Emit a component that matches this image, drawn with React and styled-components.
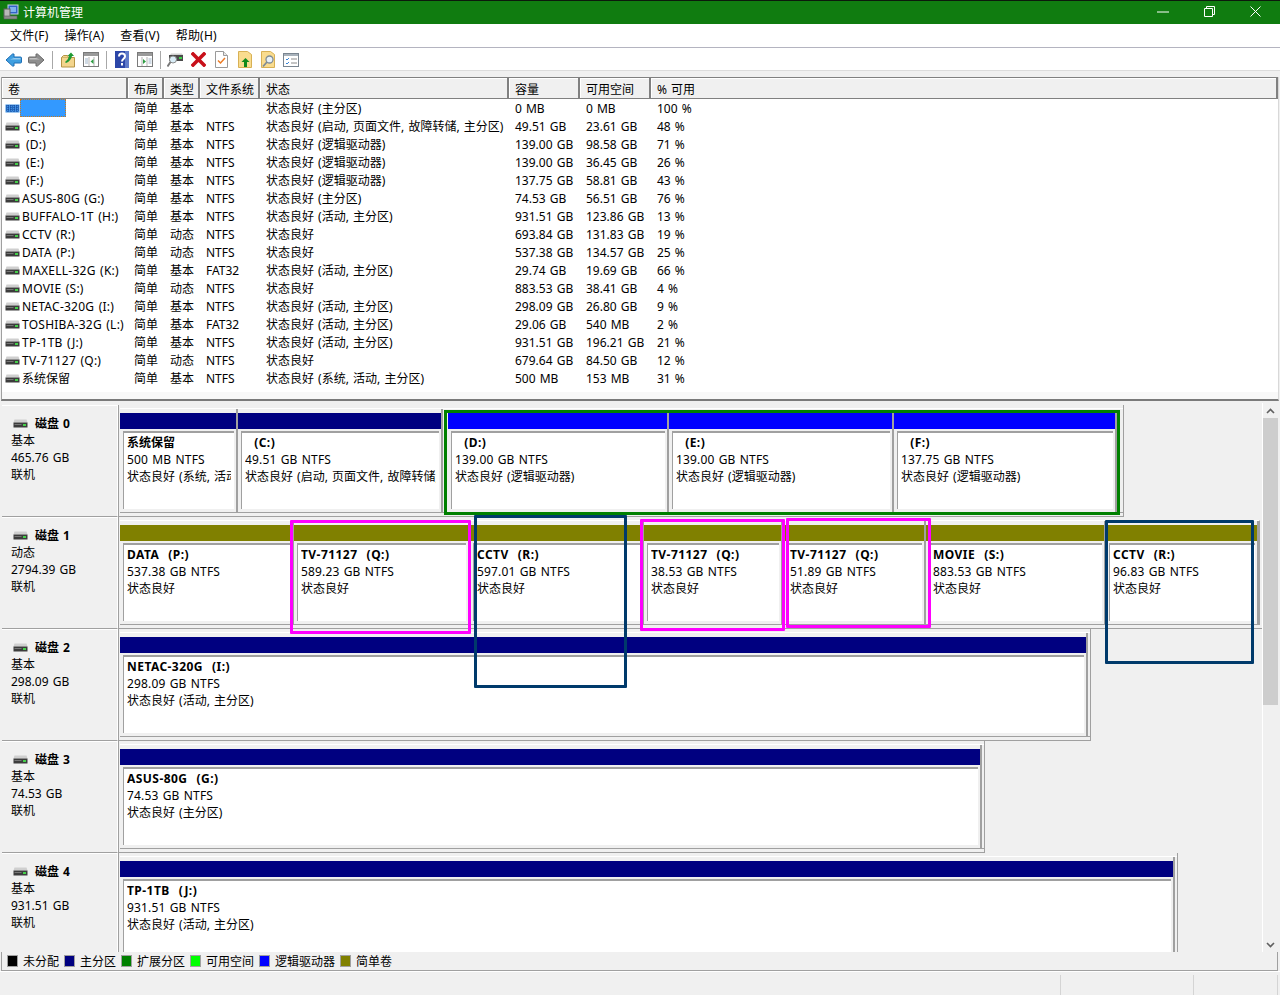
import React from "react";
import styled, { createGlobalStyle } from "styled-components";

const GlobalStyle = createGlobalStyle`
  html, body { margin: 0; padding: 0; background: #f0f0f0; }
  body { font-family: "Noto Sans", "Noto Sans CJK SC", sans-serif; font-size: 12px; color: #000; word-spacing: 1px; }
  * { box-sizing: border-box; }
`;

const volumes = [
  ["", "简单", "基本", "", "状态良好 (主分区)", "0 MB", "0 MB", "100 %"],
  ["(C:)", "简单", "基本", "NTFS", "状态良好 (启动, 页面文件, 故障转储, 主分区)", "49.51 GB", "23.61 GB", "48 %"],
  ["(D:)", "简单", "基本", "NTFS", "状态良好 (逻辑驱动器)", "139.00 GB", "98.58 GB", "71 %"],
  ["(E:)", "简单", "基本", "NTFS", "状态良好 (逻辑驱动器)", "139.00 GB", "36.45 GB", "26 %"],
  ["(F:)", "简单", "基本", "NTFS", "状态良好 (逻辑驱动器)", "137.75 GB", "58.81 GB", "43 %"],
  ["ASUS-80G (G:)", "简单", "基本", "NTFS", "状态良好 (主分区)", "74.53 GB", "56.51 GB", "76 %"],
  ["BUFFALO-1T (H:)", "简单", "基本", "NTFS", "状态良好 (活动, 主分区)", "931.51 GB", "123.86 GB", "13 %"],
  ["CCTV (R:)", "简单", "动态", "NTFS", "状态良好", "693.84 GB", "131.83 GB", "19 %"],
  ["DATA (P:)", "简单", "动态", "NTFS", "状态良好", "537.38 GB", "134.57 GB", "25 %"],
  ["MAXELL-32G (K:)", "简单", "基本", "FAT32", "状态良好 (活动, 主分区)", "29.74 GB", "19.69 GB", "66 %"],
  ["MOVIE (S:)", "简单", "动态", "NTFS", "状态良好", "883.53 GB", "38.41 GB", "4 %"],
  ["NETAC-320G (I:)", "简单", "基本", "NTFS", "状态良好 (活动, 主分区)", "298.09 GB", "26.80 GB", "9 %"],
  ["TOSHIBA-32G (L:)", "简单", "基本", "FAT32", "状态良好 (活动, 主分区)", "29.06 GB", "540 MB", "2 %"],
  ["TP-1TB (J:)", "简单", "基本", "NTFS", "状态良好 (活动, 主分区)", "931.51 GB", "196.21 GB", "21 %"],
  ["TV-71127 (Q:)", "简单", "动态", "NTFS", "状态良好", "679.64 GB", "84.50 GB", "12 %"],
  ["系统保留", "简单", "基本", "NTFS", "状态良好 (系统, 活动, 主分区)", "500 MB", "153 MB", "31 %"],
];

const headers = ["卷", "布局", "类型", "文件系统", "状态", "容量", "可用空间", "% 可用"];

const disks = [
  {
    name: "磁盘 0", kind: "基本", size: "465.76 GB", color: "#000080",
    parts: [
      { width: 118, title: "系统保留", info: "500 MB NTFS", status: "状态良好 (系统, 活动, 主分区)" },
      { width: 205, title: "\u00a0\u00a0(C:)", info: "49.51 GB NTFS", status: "状态良好 (启动, 页面文件, 故障转储, 主分区)" },
    ],
    logical: [
      { width: 221, title: "\u00a0\u00a0(D:)", info: "139.00 GB NTFS", status: "状态良好 (逻辑驱动器)" },
      { width: 225, title: "\u00a0\u00a0(E:)", info: "139.00 GB NTFS", status: "状态良好 (逻辑驱动器)" },
      { width: 223, title: "\u00a0\u00a0(F:)", info: "137.75 GB NTFS", status: "状态良好 (逻辑驱动器)" },
    ],
  },
  {
    name: "磁盘 1", kind: "动态", size: "2794.39 GB", color: "#808000", full: true,
    parts: [
      { width: 174, title: "DATA  (P:)", info: "537.38 GB NTFS", status: "状态良好" },
      { width: 176, title: "TV-71127  (Q:)", info: "589.23 GB NTFS", status: "状态良好" },
      { width: 174, title: "CCTV  (R:)", info: "597.01 GB NTFS", status: "状态良好" },
      { width: 139, title: "TV-71127  (Q:)", info: "38.53 GB NTFS", status: "状态良好" },
      { width: 143, title: "TV-71127  (Q:)", info: "51.89 GB NTFS", status: "状态良好" },
      { width: 180, title: "MOVIE  (S:)", info: "883.53 GB NTFS", status: "状态良好" },
      { width: 153, title: "CCTV  (R:)", info: "96.83 GB NTFS", status: "状态良好" },
    ],
  },
  {
    name: "磁盘 2", kind: "基本", size: "298.09 GB", color: "#000080",
    parts: [{ width: 968, title: "NETAC-320G  (I:)", info: "298.09 GB NTFS", status: "状态良好 (活动, 主分区)" }],
  },
  {
    name: "磁盘 3", kind: "基本", size: "74.53 GB", color: "#000080",
    parts: [{ width: 862, title: "ASUS-80G  (G:)", info: "74.53 GB NTFS", status: "状态良好 (主分区)" }],
  },
  {
    name: "磁盘 4", kind: "基本", size: "931.51 GB", color: "#000080",
    parts: [{ width: 1055, title: "TP-1TB  (J:)", info: "931.51 GB NTFS", status: "状态良好 (活动, 主分区)" }],
  },
];

const legend = [
  ["#000000", "未分配"],
  ["#000080", "主分区"],
  ["#008000", "扩展分区"],
  ["#00ff00", "可用空间"],
  ["#0000ff", "逻辑驱动器"],
  ["#808000", "简单卷"],
];

const marks = [
  { color: "#ff00ff", left: 290, top: 520, width: 181, height: 114 },
  { color: "#003a6b", left: 474, top: 515, width: 153, height: 173 },
  { color: "#ff00ff", left: 640, top: 519, width: 145, height: 112 },
  { color: "#ff00ff", left: 786, top: 518, width: 145, height: 110 },
  { color: "#003a6b", left: 1105, top: 520, width: 149, height: 144 },
];

const isLatin = (text) => /^[\x00-\x7f\u00a0]+$/.test(text);

const DriveIcon = () => (
  <svg width="15" height="9" viewBox="0 0 15 9">
    <path d="M1.500 0.500h12l1 3h-14z" fill="#cfcfcf" />
    <rect x="0.500" y="3.500" width="14" height="5" fill="#3c3c3c" />
    <rect x="10" y="5" width="3" height="2" fill="#45d04a" />
    <rect x="1.500" y="5" width="7" height="1" fill="#777" />
  </svg>
);

const StripedDrive = () => (
  <svg width="15" height="9" viewBox="0 0 15 9">
    <rect x="0.500" y="0.500" width="14" height="8" fill="#3f8fe0" />
    <path d="M1 2h13M1 4h13M1 6h13M3 1v7M6 1v7M9 1v7M12 1v7" stroke="#0e3f95" strokeWidth="1" strokeDasharray="1 1" />
  </svg>
);

const ArrowIcon = ({ color, edge, flip }) => (
  <svg width="17" height="14" viewBox="0 0 17 14" style={flip ? { transform: "scaleX(-1)" } : undefined}>
    <path d="M1 7L7.500 1h1.500v3h6.500q1 0 1 1v4q0 1-1 1H9v3H7.500z" fill={color} stroke={edge} strokeWidth="1" />
    <path d="M9 5h6.500v1.500H5z" fill="#fff" opacity="0.45" />
  </svg>
);

const FolderUp = () => (
  <svg width="16" height="16" viewBox="0 0 16 16">
    <path d="M1.500 5.500h13v9.500h-13z" fill="#f3d58d" stroke="#b59445" />
    <path d="M1.500 5.500l2-2h4l1 2" fill="#f3d58d" stroke="#b59445" />
    <path d="M5 10C7 8.500 8.500 6.500 9 4H7.500L11 0.500 14 4H12C11.500 7 9 10 6 11z" fill="#1f9a34" />
  </svg>
);

const PaneIcon = ({ left, color = "#2f9e44" }) => (
  <svg width="16" height="15" viewBox="0 0 16 15">
    <rect x="0.500" y="0.500" width="15" height="14" fill="#fff" stroke="#7a7a7a" />
    <rect x="1" y="1" width="14" height="3" fill="#9a9a9a" />
    <path d={left ? "M6 5v9M11 5v9" : "M5 5v9M10 5v9"} stroke="#b5b5b5" fill="none" />
    <path d={left ? "M10.500 7v5l-3-2.500z" : "M6 7v5l3-2.500z"} fill={color} />
    <path d={left ? "M2 7h3M2 9h3M2 11h3" : "M11.500 7h3M11.500 9h3M11.500 11h3"} stroke="#9fb4c8" />
  </svg>
);

const HelpIcon = () => (
  <svg width="14" height="17" viewBox="0 0 14 17">
    <rect width="14" height="17" fill="#2c46a8" />
    <rect x="10" width="4" height="17" fill="#5f7ac9" />
    <path d="M4 5.500C4 3.500 5.500 2.500 7 2.500s3 1 3 3-3 2.500-3 5" fill="none" stroke="#fff" strokeWidth="2" />
    <rect x="6" y="12" width="2" height="2.500" fill="#fff" />
  </svg>
);

const ConnectIcon = () => (
  <svg width="17" height="16" viewBox="0 0 17 16">
    <rect x="2" y="3" width="14" height="6" fill="#4b4b4b" />
    <path d="M3 3l1-1.500h11l1 1.500z" fill="#d0d0d0" />
    <rect x="12" y="5" width="3" height="2" fill="#3ed24a" />
    <circle cx="6" cy="7.500" r="3.500" fill="#d9edf7" stroke="#8a8a8a" />
    <path d="M3.500 10L0.500 14.500" stroke="#777" strokeWidth="2" />
  </svg>
);

const DeleteIcon = () => (
  <svg width="15" height="15" viewBox="0 0 15 15">
    <path d="M2 2l11 11M13 2L2 13" stroke="#c8101a" strokeWidth="3.600" strokeLinecap="square" />
  </svg>
);

const CheckDoc = () => (
  <svg width="13" height="17" viewBox="0 0 13 17">
    <path d="M0.500 0.500h8l4 4v12h-12z" fill="#fff" stroke="#9a9a9a" />
    <path d="M8.500 0.500v4h4" fill="#e8e8e8" stroke="#9a9a9a" />
    <path d="M3 9.500l2.500 2.500 4.500-5" fill="none" stroke="#ec7b24" strokeWidth="1.500" />
  </svg>
);

const FolderArrow = () => (
  <svg width="14" height="17" viewBox="0 0 14 17">
    <path d="M0.500 0.500h9l4 3v13h-13z" fill="#f9dc8f" stroke="#d8b155" />
    <path d="M6 16v-5H3.500l4-4 4 4H9v5z" fill="#118a1c" />
  </svg>
);

const FolderSearch = () => (
  <svg width="14" height="17" viewBox="0 0 14 17">
    <path d="M0.500 0.500h9l4 3v13h-13z" fill="#f9dc8f" stroke="#d8b155" />
    <circle cx="8.500" cy="8.500" r="3.500" fill="#e8f1f7" stroke="#7f8c96" strokeWidth="1.300" />
    <path d="M6 11l-4 4.500" stroke="#7f8c96" strokeWidth="1.800" />
  </svg>
);

const ListIcon = () => (
  <svg width="16" height="14" viewBox="0 0 16 14">
    <rect x="0.500" y="0.500" width="15" height="13" fill="#fff" stroke="#7a8590" />
    <rect x="1" y="1" width="14" height="2" fill="#a8b2bb" />
    <path d="M3 6l1 1 2-2M3 10l1 1 2-2" fill="none" stroke="#3a86d8" />
    <path d="M8 6h6M8 10h6" stroke="#8a8a8a" />
  </svg>
);

const AppIcon = () => (
  <svg width="16" height="16" viewBox="0 0 16 16">
    <rect x="5" y="1" width="10" height="9" fill="#2f63c8" stroke="#c7d3e6" />
    <rect x="7" y="3" width="6" height="5" fill="#7fb2ee" />
    <rect x="1" y="5" width="6" height="8" fill="#b9b9b9" stroke="#5f5f5f" />
    <rect x="1" y="12" width="13" height="3" fill="#8d8d8d" stroke="#5f5f5f" strokeWidth="0.600" />
  </svg>
);

const Page = styled.div`
  position: relative;
  width: 1280px;
  height: 995px;
  overflow: hidden;
  display: flex;
  flex-direction: column;
  background: #f0f0f0;
`;

const TitleBar = styled.div`
  height: 24px;
  flex: none;
  display: flex;
  align-items: center;
  background: #107c10;
  border-top: 1px solid #0c1a0c;
  color: #fff;
  padding: 0 2px 2px 3px;
  gap: 4px;
`;

const TitleText = styled.span`
  flex: 1;
  font-size: 12px;
`;

const WinButton = styled.span`
  width: 46px;
  margin-left: -4px;
  display: flex;
  justify-content: center;
  align-items: center;
  height: 22px;
`;

const MenuBar = styled.div`
  height: 24px;
  flex: none;
  display: flex;
  align-items: center;
  gap: 16px;
  padding: 0 0 2px 10px;
  letter-spacing: 0.2px;
  background: #fff;
  border-bottom: 1px solid #b4b4c0;
`;

const ToolBar = styled.div`
  height: 23px;
  flex: none;
  display: flex;
  align-items: center;
  padding: 1px 0 0 2px;
  background: #fff;
  border-bottom: 1px solid #dcdcdc;
`;

const ToolSlot = styled.span`
  width: 23px;
  display: flex;
  justify-content: center;
  align-items: center;
`;

const ToolSep = styled.span`
  width: 8px;
  height: 18px;
  display: flex;
  justify-content: center;
  &::before {
    content: "";
    width: 1px;
    background: #a8a8a8;
  }
`;

const ListPane = styled.div`
  flex: none;
  height: 324px;
  margin: 6px 1px 0 1px;
  display: flex;
  flex-direction: column;
  background: #fff;
  border-left: 1px solid #a0a0a0;
  border-right: 1px solid #d8d8d8;
  border-bottom: 2px solid #7a7a7a;
`;

const columns = "126px 36px 36px 60px 249px 71px 71px 1fr";

const HeaderRow = styled.div`
  display: grid;
  grid-template-columns: ${columns};
  height: 22px;
  flex: none;
`;

const HeaderCell = styled.div`
  display: flex;
  align-items: center;
  padding: 2px 0 0 6px;
  background: #f0f0f0;
  border-top: 1px solid #808080;
  border-right: 2px solid #808080;
  border-bottom: 2px solid #808080;
  box-shadow: inset 1px 1px 0 #fff;
`;

const Rows = styled.div`
  flex: 1;
  display: flex;
  flex-direction: column;
  overflow: hidden;
  background: linear-gradient(#fff 293px, #f8f8f8 293px);
`;

const Row = styled.div`
  display: grid;
  grid-template-columns: ${columns};
  height: 18px;
  flex: none;
  align-items: center;
  white-space: nowrap;
`;

const VolumeCell = styled.div`
  display: flex;
  align-items: center;
  padding-left: 3px;
  gap: 2px;
`;

const VolumeName = styled.span`
  padding-left: ${(p) => (p.$drive ? "4px" : "0")};
  letter-spacing: ${(p) => (p.$latin ? "0.25px" : "0")};
`;

const Selected = styled.span`
  width: 46px;
  height: 18px;
  margin-left: -2px;
  background: #3399ff;
  outline: 1px dotted #c87a1e;
  outline-offset: -1px;
`;

const Cell = styled.div`
  padding-left: 6px;
`;

const DiskPane = styled.div`
  flex: 1;
  min-height: 0;
  display: flex;
  padding-top: 4px;
  margin-left: 2px;
  overflow: hidden;
`;

const DiskList = styled.div`
  width: 1260px;
  flex: none;
  display: flex;
  flex-direction: column;
`;

const DiskRow = styled.div`
  display: flex;
  height: 112px;
  flex: none;
`;

const DiskLabel = styled.div`
  width: 116px;
  flex: none;
  padding: 9px 0 0 9px;
  line-height: 17px;
  border-top: 1px solid #fff;
  border-right: 1px solid #fff;
  border-bottom: 1px solid #a0a0a0;
`;

const DiskTitle = styled.div`
  display: flex;
  align-items: center;
  gap: 7px;
  font-weight: 700;
  padding-left: 2px;
`;

const DiskSlot = styled.div`
  width: ${(p) => (p.$full ? "1144px" : "fit-content")};
  display: flex;
  flex-direction: column;
  padding: 3px 0 3px 1px;
  border-left: 1px solid #a0a0a0;
  border-bottom: 1px solid #a0a0a0;
  border-right: ${(p) => (p.$full ? "none" : "1px solid #a0a0a0")};
`;

const Frame = styled.div`
  flex: 1;
  min-height: 0;
  display: flex;
  width: fit-content;
  padding-right: ${(p) => (p.$full ? "0" : "2px")};
  border-top: 1px solid #fff;
  border-bottom: 1px solid #a0a0a0;
  border-right: ${(p) => (p.$full ? "1px solid #a0a0a0" : "none")};
`;

const Partition = styled.div`
  width: ${(p) => p.$width}px;
  flex: none;
  display: flex;
  flex-direction: column;
  padding-top: ${(p) => (p.$nested ? "0" : "4px")};
  border-right: 2px solid #a0a0a0;
`;

const PartBar = styled.div`
  height: 16px;
  flex: none;
  background: ${(p) => p.$color};
`;

const PartBody = styled.div`
  flex: 1;
  min-height: 0;
  margin: 2px 2px 3px 3px;
  padding: 1px 3px 0 3px;
  background: #fff;
  border-top: 2px solid #a0a0a0;
  border-left: 1px solid #a0a0a0;
  line-height: 17px;
`;

const PartText = styled.div`
  height: 100%;
  white-space: pre;
  overflow: hidden;
`;

const PartTitle = styled.div`
  font-weight: 700;
  letter-spacing: ${(p) => (p.$latin ? "0.45px" : "0")};
`;

const PartInfo = styled.div`
  letter-spacing: 0.15px;
`;

const LogicalGroup = styled.div`
  display: flex;
  flex: none;
  margin: 1px 1px -3px 1px;
  padding-left: 1px;
  border: 3px solid #008000;
`;

const Scrollbar = styled.div`
  width: 16px;
  flex: none;
  margin-top: -2px;
  display: flex;
  flex-direction: column;
  justify-content: space-between;
  align-items: center;
  border-left: 1px solid #fff;
`;

const ScrollArrow = styled.div`
  height: 15px;
  display: flex;
  align-items: center;
  justify-content: center;
  flex: none;
`;

const ScrollTrack = styled.div`
  flex: 1;
  width: 100%;
`;

const ScrollThumb = styled.div`
  width: 100%;
  height: 287px;
  flex: none;
  background: #cdcdcd;
`;

const Legend = styled.div`
  height: 19px;
  flex: none;
  display: flex;
  align-items: center;
  gap: 5px;
  margin: 0 2px 0 1px;
  padding-left: 5px;
  background: #f0f0f0;
  border-left: 1px solid #a0a0a0;
  border-right: 1px solid #a0a0a0;
  border-bottom: 1px solid #a0a0a0;
`;

const LegendItem = styled.span`
  display: flex;
  align-items: center;
  gap: 5px;
`;

const Swatch = styled.span`
  width: 11px;
  height: 12px;
  background: ${(p) => p.$color};
  border: 1px solid #a0a0a0;
`;

const StatusBar = styled.div`
  height: 24px;
  flex: none;
  display: flex;
  justify-content: flex-end;
  padding: 3px 2px 0 0;
  border-top: 1px solid #fff;
`;

const StatusCell = styled.div`
  width: ${(p) => p.$width}px;
  border-left: 1px solid #d4d4d4;
  border-right: ${(p) => (p.$last ? "1px solid #d4d4d4" : "none")};
`;

const Mark = styled.div`
  position: absolute;
  left: ${(p) => p.$left}px;
  top: ${(p) => p.$top}px;
  width: ${(p) => p.$width}px;
  height: ${(p) => p.$height}px;
  border: 3px solid ${(p) => p.$color};
  border-radius: 1px;
  pointer-events: none;
`;

const PartitionBox = ({ part, color, nested }) => (
  <Partition $width={part.width} $nested={nested}>
    <PartBar $color={color} />
    <PartBody>
      <PartText>
        <PartTitle $latin={isLatin(part.title)}>{part.title}</PartTitle>
        <PartInfo>{part.info}</PartInfo>
        <div>{part.status}</div>
      </PartText>
    </PartBody>
  </Partition>
);

export default function App() {
  return (
    <Page>
      <GlobalStyle />
      <TitleBar>
        <AppIcon />
        <TitleText>计算机管理</TitleText>
        <WinButton>
          <svg width="12" height="2" viewBox="0 0 12 2"><path d="M0 1h12" stroke="#fff" /></svg>
        </WinButton>
        <WinButton>
          <svg width="11" height="11" viewBox="0 0 11 11">
            <path d="M2.500 2.500V0.500h8v8h-2M0.500 2.500h8v8h-8z" fill="none" stroke="#fff" />
          </svg>
        </WinButton>
        <WinButton>
          <svg width="11" height="11" viewBox="0 0 11 11"><path d="M0.500 0.500l10 10M10.500 0.500l-10 10" stroke="#fff" /></svg>
        </WinButton>
      </TitleBar>

      <MenuBar>
        <span>文件(F)</span>
        <span>操作(A)</span>
        <span>查看(V)</span>
        <span>帮助(H)</span>
      </MenuBar>

      <ToolBar>
        <ToolSlot><ArrowIcon color="#3f9fe0" edge="#1f6fb5" /></ToolSlot>
        <ToolSlot><ArrowIcon color="#8e8e8e" edge="#6a6a6a" flip /></ToolSlot>
        <ToolSep />
        <ToolSlot><FolderUp /></ToolSlot>
        <ToolSlot><PaneIcon left /></ToolSlot>
        <ToolSep />
        <ToolSlot><HelpIcon /></ToolSlot>
        <ToolSlot><PaneIcon /></ToolSlot>
        <ToolSep />
        <ToolSlot><ConnectIcon /></ToolSlot>
        <ToolSlot><DeleteIcon /></ToolSlot>
        <ToolSlot><CheckDoc /></ToolSlot>
        <ToolSlot><FolderArrow /></ToolSlot>
        <ToolSlot><FolderSearch /></ToolSlot>
        <ToolSlot><ListIcon /></ToolSlot>
      </ToolBar>

      <ListPane>
        <HeaderRow>
          {headers.map((h) => (
            <HeaderCell key={h}>{h}</HeaderCell>
          ))}
        </HeaderRow>
        <Rows>
          {volumes.map((v, i) => (
            <Row key={i}>
              <VolumeCell>
                {i === 0 ? <StripedDrive /> : <DriveIcon />}
                {i === 0 ? (
                  <Selected />
                ) : (
                  <VolumeName $drive={v[0].startsWith("(")} $latin={isLatin(v[0])}>{v[0]}</VolumeName>
                )}
              </VolumeCell>
              {v.slice(1).map((text, j) => (
                <Cell key={j}>{text}</Cell>
              ))}
            </Row>
          ))}
        </Rows>
      </ListPane>

      <DiskPane>
        <DiskList>
          {disks.map((d) => (
            <DiskRow key={d.name}>
              <DiskLabel>
                <DiskTitle><DriveIcon />{d.name}</DiskTitle>
                <div>{d.kind}</div>
                <div>{d.size}</div>
                <div>联机</div>
              </DiskLabel>
              <DiskSlot $full={d.full}>
                <Frame $full={d.full}>
                  {d.parts.map((p) => (
                    <PartitionBox key={p.title + p.info} part={p} color={d.color} />
                  ))}
                  {d.logical && (
                    <LogicalGroup>
                      {d.logical.map((p) => (
                        <PartitionBox key={p.title} part={p} color="#0000ff" nested />
                      ))}
                    </LogicalGroup>
                  )}
                </Frame>
              </DiskSlot>
            </DiskRow>
          ))}
        </DiskList>
        <Scrollbar>
          <ScrollArrow>
            <svg width="9" height="6" viewBox="0 0 9 6"><path d="M1 5l3.500-3.500L8 5" fill="none" stroke="#606060" strokeWidth="1.600" /></svg>
          </ScrollArrow>
          <ScrollThumb />
          <ScrollTrack />
          <ScrollArrow>
            <svg width="9" height="6" viewBox="0 0 9 6"><path d="M1 1l3.500 3.500L8 1" fill="none" stroke="#606060" strokeWidth="1.600" /></svg>
          </ScrollArrow>
        </Scrollbar>
      </DiskPane>

      <Legend>
        {legend.map(([color, label]) => (
          <LegendItem key={label}>
            <Swatch $color={color} />
            {label}
          </LegendItem>
        ))}
      </Legend>

      <StatusBar>
        <StatusCell $width={133} />
        <StatusCell $width={85} $last />
      </StatusBar>

      {marks.map((m) => (
        <Mark key={m.left} $color={m.color} $left={m.left} $top={m.top} $width={m.width} $height={m.height} />
      ))}
    </Page>
  );
}
